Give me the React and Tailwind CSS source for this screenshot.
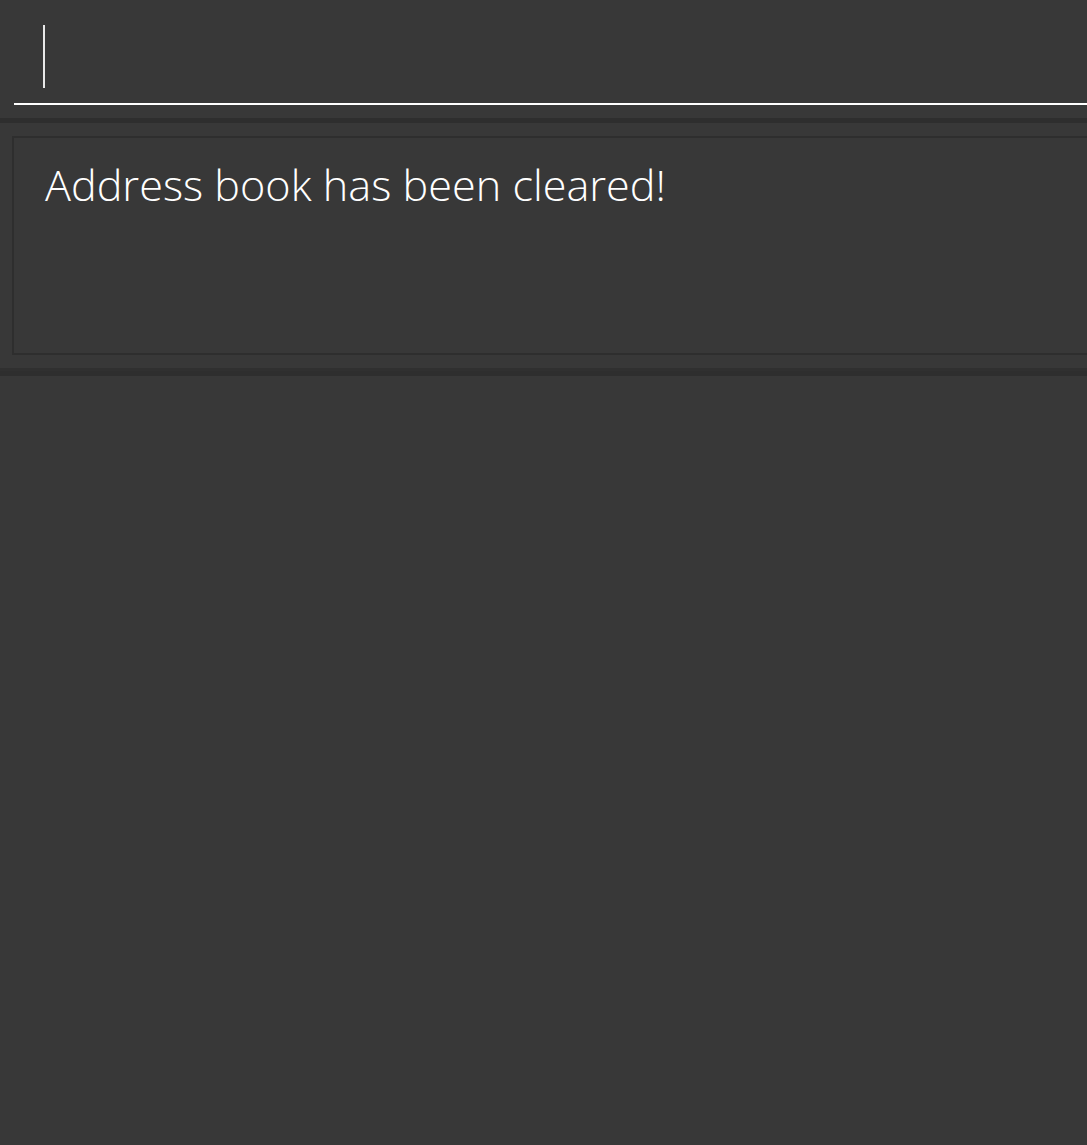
export default function App() {
  return (
    <div className="w-[1087px] h-[1145px] overflow-hidden bg-[#383838] flex flex-col" style={{ fontFamily: '"Open Sans", "Noto Sans", sans-serif' }}>
      <div className="h-[118px] pl-[14px] pt-[25px] flex flex-col">
        <div className="h-[80px] border-b-[2px] border-white w-[1200px] pl-[29px]">
          <div className="w-[2px] h-[63px] bg-[#e8e8e8]"></div>
        </div>
      </div>
      <div className="h-[5px] bg-[#2e2e2e]"></div>
      <div className="pt-[13px] pl-[12px] pb-[13px]">
        <div className="w-[1200px] h-[219px] border-[2px] border-[#2e2e2e] pl-[31px] pt-[21px]">
          <div className="text-[43.2px] font-light text-white leading-[1.2] tracking-[0px]">Address book has been cleared!</div>
        </div>
      </div>
      <div className="h-[8px] bg-[#2e2e2e] border-t-[3px] border-[#303030]"></div>
      <div className="flex-1"></div>
    </div>
  );
}
